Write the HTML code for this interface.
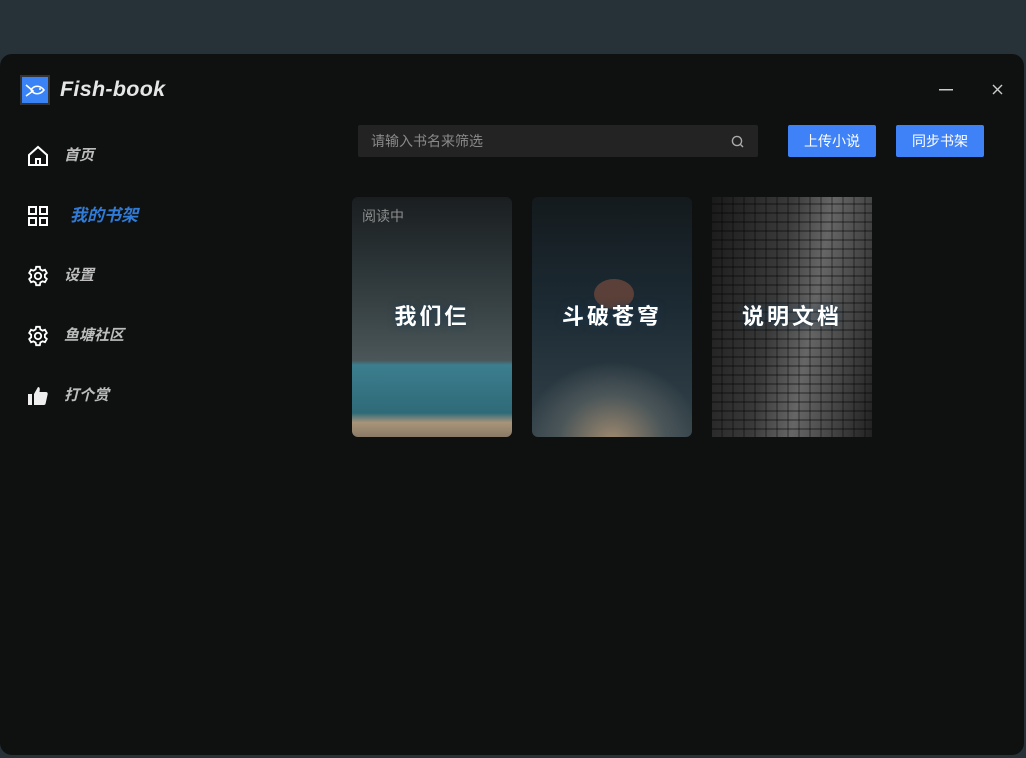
<!DOCTYPE html>
<html><head><meta charset="utf-8"><style>
*{margin:0;padding:0;box-sizing:border-box}
body{width:1026px;height:758px;background:#263238;font-family:"Liberation Sans","Noto Sans CJK SC",sans-serif;position:relative;overflow:hidden}
.win{position:absolute;left:0;top:54px;width:1024px;height:701px;background:#0f1111;border-radius:12px}
.logo{position:absolute;left:20px;top:75px;width:30px;height:30px;background:#3a83f6;border:2px solid #333;}
.brand{position:absolute;left:60px;top:77px;font-size:21.5px;font-weight:bold;font-style:italic;color:#e6e6e6;letter-spacing:.3px}
.nav{position:absolute;left:27px;color:#bdbdbd;font-size:15px;font-weight:bold;font-style:italic}
.nav svg{position:absolute;left:0;top:0}
.nav span{position:absolute;left:37px;top:1px;white-space:nowrap;line-height:20px}
.search{position:absolute;left:358px;top:125px;width:400px;height:32px;background:#232323;border-radius:2px;color:#8a8a8a;font-size:14px;line-height:32px;padding-left:13px}
.btn{position:absolute;top:125px;width:88px;height:32px;background:#3f82f7;color:#fff;font-size:14px;line-height:32px;text-align:center;border-radius:2px}
.card{position:absolute;top:197px;width:160px;height:240px;border-radius:6px;overflow:hidden}
.card .t{position:absolute;left:0;right:0;top:102px;text-align:center;color:#fff;font-size:22px;font-weight:bold;font-family:"Noto Sans CJK SC",sans-serif;letter-spacing:3px;text-shadow:0 0 8px #1b3a55}
</style></head><body>
<div class="win"></div>
<div class="logo"><svg width="26" height="26" viewBox="0 0 26 26"><path d="M4 8 L11 14 L4 19 M9 13 C12 8,18 8,22 13 C18 18,12 18,9 13" stroke="#fff" stroke-width="1.6" fill="none"/><circle cx="18" cy="12" r="1" fill="#fff"/></svg></div>
<div class="brand">Fish-book</div>
<div class="nav" style="top:145px"><svg width="22" height="22" viewBox="0 0 22 22"><path d="M2 10 L11 2 L20 10 V20 H2 Z M9 20 V14 H13 V20" stroke="#fff" stroke-width="2" fill="none"/></svg><span>首页</span></div>
<div class="nav" style="top:205px"><svg width="22" height="22" viewBox="0 0 22 22" fill="none" stroke="#fff" stroke-width="2"><rect x="2" y="2" width="7" height="7"/><rect x="13" y="2" width="7" height="7"/><rect x="2" y="13" width="7" height="7"/><rect x="13" y="13" width="7" height="7"/></svg><span style="left:43px;color:#2f7bd6;font-size:17px">我的书架</span></div>
<div class="nav" style="top:265px"><svg width="22" height="22" viewBox="0 0 24 24" fill="none" stroke="#fff" stroke-width="2"><circle cx="12" cy="12" r="3.5"/><path d="M10 2h4l.6 2.8 2.3 1.3 2.7-.9 2 3.5-2.1 1.9v2.7l2.1 1.9-2 3.5-2.7-.9-2.3 1.3L14 22h-4l-.6-2.8-2.3-1.3-2.7.9-2-3.5 2.1-1.9v-2.7L2.4 8.7l2-3.5 2.7.9 2.3-1.3z"/></svg><span>设置</span></div>
<div class="nav" style="top:325px"><svg width="22" height="22" viewBox="0 0 24 24" fill="none" stroke="#fff" stroke-width="2"><circle cx="12" cy="12" r="3.5"/><path d="M10 2h4l.6 2.8 2.3 1.3 2.7-.9 2 3.5-2.1 1.9v2.7l2.1 1.9-2 3.5-2.7-.9-2.3 1.3L14 22h-4l-.6-2.8-2.3-1.3-2.7.9-2-3.5 2.1-1.9v-2.7L2.4 8.7l2-3.5 2.7.9 2.3-1.3z"/></svg><span>鱼塘社区</span></div>
<div class="nav" style="top:385px"><svg width="22" height="22" viewBox="0 0 22 22"><rect x="1" y="9" width="4" height="11" fill="#eee"/><path d="M7 9 L11 2 C13 2,13 4,12.5 7 H19 C20.5 7,21 8.5,20.5 10 L18.5 19 C18 20,17 20,16 20 H7 Z" fill="#eee"/></svg><span>打个赏</span></div>
<svg style="position:absolute;left:939px;top:89px" width="14" height="2"><rect width="14" height="1.5" fill="#ccc"/></svg>
<svg style="position:absolute;left:992px;top:84px" width="11" height="11"><path d="M1 1L10 10M10 1L1 10" stroke="#ccc" stroke-width="1.4"/></svg>
<div class="search">请输入书名来筛选<svg style="position:absolute;left:373px;top:10px" width="13" height="13" viewBox="0 0 13 13"><circle cx="6" cy="6" r="4.6" stroke="#aaa" stroke-width="1.4" fill="none"/><path d="M9.5 9.5L12 12" stroke="#aaa" stroke-width="1.4"/></svg></div>
<div class="btn" style="left:788px">上传小说</div>
<div class="btn" style="left:896px">同步书架</div>
<div class="card" style="left:352px;background:linear-gradient(#1a1e20 0%,#2c3538 30%,#4a5658 68%,#3c7e8e 70%,#2f6a78 90%,#a8947a 94%,#8a7a66 100%)"><div style="position:absolute;left:10px;top:9px;color:#8d8d8d;font-size:14px">阅读中</div><div class="t">我们仨</div></div>
<div class="card" style="left:532px;background:radial-gradient(ellipse 90px 80px at 80px 245px,#a08a70,#4a5558 60%,transparent 100%),linear-gradient(#141a1d 0%,#1c2a33 45%,#33424a 100%)"><div style="position:absolute;left:62px;top:82px;width:40px;height:30px;border-radius:50%;background:#5a4038"></div><div class="t">斗破苍穹</div></div>
<div class="card" style="left:712px;background:linear-gradient(100deg,#1a1a1a 0%,#3a3a3a 40%,#666 60%,#444 80%,#222 100%);border-radius:0"><div style="position:absolute;inset:0;background:repeating-linear-gradient(0deg,transparent 0 7px,rgba(0,0,0,.3) 7px 9px),repeating-linear-gradient(90deg,transparent 0 9px,rgba(0,0,0,.25) 9px 11px)"></div><div class="t">说明文档</div></div>
</body></html>
